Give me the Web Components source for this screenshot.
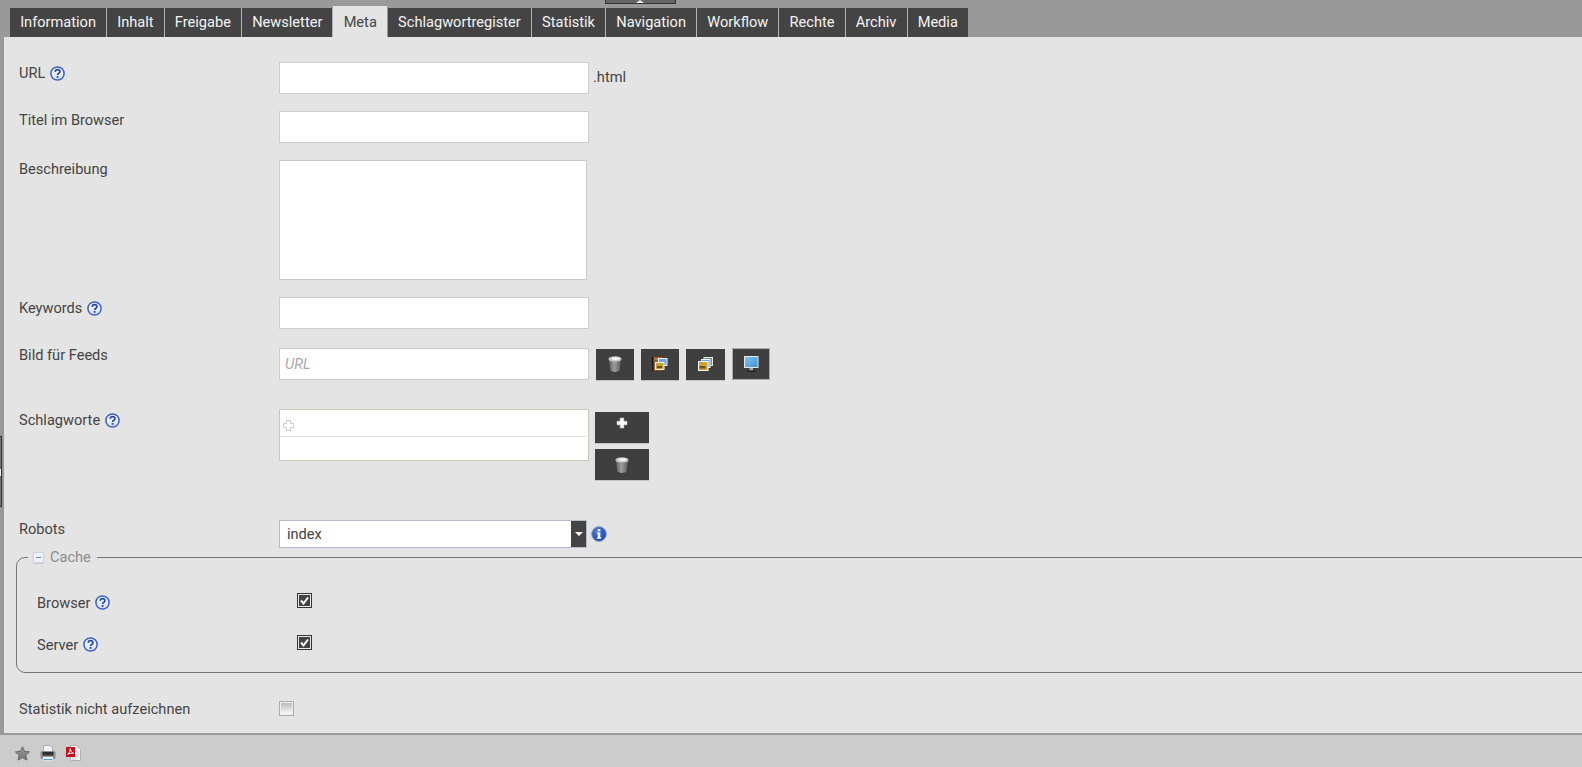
<!DOCTYPE html>
<html lang="de">
<head>
<meta charset="utf-8">
<title>Meta</title>
<style>
html,body{margin:0;padding:0;height:100%;overflow:hidden;background:#e4e4e4;font:14.6px Roboto,"Liberation Sans",sans-serif;color:#444}
</style>
</head>
<body>
<x-shell>
  <x-tabs slot="tabs">
    <x-tab>Information</x-tab><x-tab>Inhalt</x-tab><x-tab>Freigabe</x-tab><x-tab>Newsletter</x-tab><x-tab active>Meta</x-tab><x-tab>Schlagwortregister</x-tab><x-tab>Statistik</x-tab><x-tab>Navigation</x-tab><x-tab>Workflow</x-tab><x-tab>Rechte</x-tab><x-tab>Archiv</x-tab><x-tab>Media</x-tab>
  </x-tabs>

  <x-row style="--lt:2px;--after:17px">
    <span slot="label">URL</span><x-icon slot="label" name="help"></x-icon>
    <x-input></x-input><span style="margin-left:4px;position:relative;top:-1px">.html</span>
  </x-row>
  <x-row style="--lt:0px;--after:17px">
    <span slot="label">Titel im Browser</span>
    <x-input></x-input>
  </x-row>
  <x-row style="--lt:0px;--after:17px;--align:flex-start">
    <span slot="label">Beschreibung</span>
    <x-textarea></x-textarea>
  </x-row>
  <x-row style="--lt:2px;--after:19px">
    <span slot="label">Keywords</span><x-icon slot="label" name="help"></x-icon>
    <x-input></x-input>
  </x-row>
  <x-row style="--lt:-2px;--after:29px">
    <span slot="label">Bild für Feeds</span>
    <x-input placeholder="URL"></x-input>
    <x-toolbar>
      <x-button w="38" h="31"><x-icon name="trash"></x-icon></x-button>
      <x-button w="38" h="31"><x-icon name="album"></x-icon></x-button>
      <x-button w="39" h="31"><x-icon name="images"></x-icon></x-button>
      <x-button w="38" h="32" outlined><x-icon name="monitor"></x-icon></x-button>
    </x-toolbar>
  </x-row>
  <x-row style="--lt:2px;--after:40px;--align:flex-start">
    <span slot="label">Schlagworte</span><x-icon slot="label" name="help"></x-icon>
    <x-tagbox></x-tagbox>
    <x-stack>
      <x-button w="54" h="31" top><x-icon name="plus"></x-icon></x-button>
      <x-button w="54" h="31"><x-icon name="trash"></x-icon></x-button>
    </x-stack>
  </x-row>
  <x-row style="--lt:0px;--after:0px">
    <span slot="label">Robots</span>
    <x-select>index</x-select><x-icon name="info" style="margin-left:4px"></x-icon>
  </x-row>

  <x-group legend="Cache">
    <x-row style="--lt:2px;--after:25px;--lh:17px">
      <span slot="label">Browser</span><x-icon slot="label" name="help"></x-icon>
      <x-check checked></x-check>
    </x-row>
    <x-row style="--lt:2px;--after:0;--lh:17px">
      <span slot="label">Server</span><x-icon slot="label" name="help"></x-icon>
      <x-check checked></x-check>
    </x-row>
  </x-group>

  <x-row style="--lt:0px;--after:0;--lh:17px">
    <span slot="label">Statistik nicht aufzeichnen</span>
    <x-check></x-check>
  </x-row>

  <x-icon slot="footer" name="star"></x-icon>
  <x-icon slot="footer" name="printer"></x-icon>
  <x-icon slot="footer" name="pdf"></x-icon>
</x-shell>

<script>
const ICONS = {
help:{w:15,h:15,svg:`<defs><linearGradient id="g" x1="0" y1="0" x2="0" y2="1"><stop offset="0" stop-color="#fff"/><stop offset="1" stop-color="#d5def6"/></linearGradient></defs>
<circle cx="7.5" cy="7.5" r="6.6" fill="url(#g)" stroke="#3a60cc" stroke-width="1.5"/>
<path d="M5.2 5.9C5.3 4.4 6.3 3.7 7.5 3.7 8.9 3.7 9.9 4.5 9.9 5.7 9.9 7.3 7.6 7.2 7.6 9" fill="none" stroke="#2347b0" stroke-width="1.7"/>
<rect x="6.7" y="10" width="1.8" height="1.8" fill="#2347b0"/>`},
info:{w:16,h:16,svg:`<defs><radialGradient id="i" cx=".4" cy=".3" r=".8"><stop offset="0" stop-color="#4f7fe6"/><stop offset="1" stop-color="#1738a0"/></radialGradient></defs>
<circle cx="8" cy="8" r="7.4" fill="url(#i)" stroke="#9aa6bd" stroke-width="1"/>
<rect x="6.8" y="3" width="2.5" height="2.3" fill="#fff"/><path d="M5.8 6.4H9.3V11.4H10.3V12.8H5.8V11.4H6.8V7.8H5.8Z" fill="#fff"/>`},
trash:{w:14,h:16,svg:`<defs><linearGradient id="t" x1="0" y1="0" x2="1" y2="0"><stop offset="0" stop-color="#626262"/><stop offset=".45" stop-color="#9c9c9c"/><stop offset="1" stop-color="#5c5c5c"/></linearGradient></defs>
<path d="M.8 3.5 2.6 14.6C3.6 16.3 10.4 16.3 11.4 14.6L13.2 3.5Z" fill="url(#t)"/>
<ellipse cx="7" cy="3" rx="6.6" ry="2.8" fill="#c4c4c4"/><ellipse cx="7.6" cy="2.6" rx="4" ry="1.7" fill="#f2f2f2"/>`},
album:{w:16,h:16,svg:`<rect x="0.5" y="0.5" width="10" height="14.5" fill="#96593a" stroke="#6b3418"/><rect x="0" y="1" width="1.5" height="14" fill="#151515"/><rect x="2.5" y="2" width="6.5" height="2" fill="#b57d58"/>
<rect x="6.5" y="2.5" width="8.5" height="7" fill="#6ca6dc" stroke="#e8f0f8"/><rect x="3.5" y="6.5" width="8.5" height="7" fill="#c6a030" stroke="#f8f8f0"/><rect x="5" y="10" width="5" height="2" fill="#6b5314"/>`},
images:{w:15,h:14,svg:`<rect x="6" y="0.5" width="8.5" height="8" fill="#6e8f9f" stroke="#e4efc8"/><rect x="3.5" y="2.5" width="8.5" height="8" fill="#6aa3d8" stroke="#eef"/>
<rect x="0.5" y="4.5" width="9.5" height="9" fill="#d0a52e" stroke="#fff"/><rect x="1.5" y="9" width="6" height="2.5" fill="#6b5314"/>`},
monitor:{w:15,h:17,svg:`<defs><linearGradient id="m" x1="0" y1="0" x2="1" y2="1"><stop offset="0" stop-color="#8cc6ee"/><stop offset="1" stop-color="#3f8ed4"/></linearGradient></defs>
<rect x="0.5" y="0.5" width="13.5" height="11" fill="url(#m)" stroke="#dfe7ec"/><rect x="5.5" y="12" width="3.5" height="2.5" fill="#a8a8a8"/><rect x="3" y="14.5" width="9" height="1.5" fill="#262626"/>`},
plus:{w:12,h:12,svg:`<path d="M4.2 1H7.8V4.2H11V7.8H7.8V11H4.2V7.8H1V4.2H4.2Z" fill="#fff" stroke="#cfd8e8" stroke-width=".5"/>`},
star:{w:15,h:15,svg:`<defs><linearGradient id="s" x1="0" y1="0" x2="0" y2="1"><stop offset="0" stop-color="#9a9a9a"/><stop offset="1" stop-color="#777"/></linearGradient></defs>
<path d="M7.5 .8 9.6 5.3 14.5 5.9 10.8 9.2 11.9 14.1 7.5 11.6 3.1 14.1 4.2 9.2 .5 5.9 5.4 5.3Z" fill="url(#s)" stroke="#666" stroke-width="1"/>`},
printer:{w:16,h:16,svg:`<path d="M3.5 .5H10L12.5 3V7H3.5Z" fill="#f4f7f9" stroke="#a4adb3"/><rect x=".5" y="6" width="15" height="8" rx="1.5" fill="#8d9094"/><rect x="2.5" y="7" width="11" height="3.5" fill="#303030"/>
<rect x="3" y="12" width="10" height="3.5" fill="#eef3f6"/><rect x="3.5" y="14" width="9" height="1" fill="#46a6c8"/>`},
pdf:{w:15,h:16,svg:`<path d="M4.5 .5H10.5L14.5 4.5V15.5H4.5Z" fill="#fafafa" stroke="#a8b0b8"/><path d="M6 8H13M9 6H13M6 10H13M6 12H13M6 14H11" stroke="#c6ccd2"/>
<rect x="0" y="2" width="9" height="10" fill="#c80f1c"/><path d="M1.6 9.3C3.2 8.4 4.6 5.6 4.2 3.6 4.7 5.8 5.8 7.7 7.6 8.2 5.6 8 3.2 8.4 1.6 9.3Z" fill="none" stroke="#fff"/>`}
};

function def(name, css, html, extra){
  const tpl=document.createElement('template');
  tpl.innerHTML=`<style>${css}</style>${html}`;
  customElements.define(name,class extends HTMLElement{
    constructor(){super();this.attachShadow({mode:'open'}).appendChild(tpl.content.cloneNode(true));}
    connectedCallback(){extra&&extra(this,this.shadowRoot);}
  });
}

def('x-shell',`
:host{display:flex;flex-direction:column;height:100vh;width:100%;overflow:hidden;position:relative;background:#999}
.top{flex:none;height:37px;background:#999}
main{flex:1;min-height:0;margin-left:4px;background:#e4e4e4;padding:25px 0 0 15px;overflow:hidden;box-sizing:border-box}
footer{flex:none;height:34px;box-sizing:border-box;border-top:2px solid #999;background:#ccc;margin-left:4px;display:flex;align-items:center;padding:4px 0 0 11px;gap:10px;position:relative}
.foot-strip{position:absolute;left:0;bottom:0;width:4px;height:32px;background:#ccc}
.htop{position:absolute;left:605px;top:0;width:71px;height:4px;box-sizing:border-box;background:#666;border:1px solid #333;border-top:0}
.htop::after{content:"";position:absolute;left:30px;top:0;border:4px solid transparent;border-top:0;border-bottom:3px solid #eee}
.hleft{position:absolute;left:0;top:436px;width:2px;height:71px;box-sizing:border-box;background:#777;border:1px solid #333;border-left:0}
.hleft::after{content:"";position:absolute;left:0;top:32px;width:1px;height:7px;background:#eee}
`,`<div class="top"><slot name="tabs"></slot></div><main><slot></slot></main>
<footer><slot name="footer"></slot></footer><div class="foot-strip"></div><div class="htop"></div><div class="hleft"></div>`);

def('x-tabs',`:host{display:flex;align-items:flex-end;height:37px;padding-left:10px;box-sizing:border-box}`,`<slot></slot>`);

def('x-tab',`
:host{display:block;height:29px;line-height:29px;padding:0 10.15px;background:#444;color:#f4f4f4;border-right:1px solid #b5b5b5;white-space:nowrap}
:host(:last-child){border-right:0}
:host([active]){height:31px;line-height:33px;background:#e4e4e4;color:#444;border-right:1px solid #999}
`,`<slot></slot>`);

def('x-row',`
:host{display:grid;grid-template-columns:260px 1fr;margin-bottom:var(--after,17px)}
.l{display:flex;align-items:center;gap:4.5px;height:var(--lh,18px);position:relative;top:var(--lt,0)}
.c{display:flex;align-items:var(--align,center);min-width:0}
`,`<div class="l"><slot name="label"></slot></div><div class="c"><slot></slot></div>`);

def('x-input',`
:host{display:block;width:310px;height:32px}
input{display:block;width:100%;height:100%;box-sizing:border-box;border:1px solid #ccc;background:#fff;outline:0;margin:0;padding:0 5px;font:inherit;color:#444}
input::placeholder{font-style:italic;color:#aaa;opacity:1}
`,`<input type="text">`,(h,s)=>{const p=h.getAttribute('placeholder');if(p)s.querySelector('input').placeholder=p;});

def('x-textarea',`
:host{display:block;width:308px;height:120px}
textarea{display:block;width:100%;height:100%;box-sizing:border-box;border:1px solid #ccc;background:#fff;outline:0;margin:0;padding:4px;resize:none}
`,`<textarea></textarea>`);

def('x-toolbar',`:host{display:flex;align-items:center;gap:7px;margin-left:7px}`,`<slot></slot>`);
def('x-stack',`:host{display:flex;flex-direction:column;gap:6px;margin:3px 0 0 6px}`,`<slot></slot>`);

def('x-button',`
:host{display:flex;align-items:center;justify-content:center;box-sizing:border-box;background:#3f3f3f;box-shadow:0 1px 0 #c4c4c4}
:host([outlined]){border:1px solid #aaa;box-shadow:none}
:host([top]){align-items:flex-start;padding-top:5px}
`,`<slot></slot>`,(h)=>{h.style.width=h.getAttribute('w')+'px';h.style.height=h.getAttribute('h')+'px';});

def('x-icon',`:host{display:block;flex:none;line-height:0}svg{display:block;overflow:visible}`,``,(h,s)=>{
  const i=ICONS[h.getAttribute('name')];
  if(s.querySelector('svg'))return;
  s.appendChild(document.createRange().createContextualFragment(`<svg xmlns="http://www.w3.org/2000/svg" width="${i.w}" height="${i.h}" viewBox="0 0 ${i.w} ${i.h}">${i.svg}</svg>`));
});

def('x-tagbox',`
:host{display:block;width:310px;height:52px;box-sizing:border-box;border:1px solid #c6cbb8;background:#fff;padding:0 2px 0 0}
.r{height:27px;border-bottom:1px solid #dfe2d6;display:flex;align-items:flex-end;padding:0 0 5px 3px;box-sizing:border-box}
svg{display:block}
`,`<div class="r"><svg width="11" height="11" viewBox="0 0 11 11"><path d="M3.5.5H7.5V3.5H10.5V7.5H7.5V10.5H3.5V7.5H.5V3.5H3.5Z" fill="#fff" stroke="#ccc"/></svg></div>`);

def('x-select',`
:host{display:flex;width:308px;height:28px;box-sizing:border-box;border:1px solid #b5bcc9;background:#fff;align-items:center;justify-content:space-between;padding-left:7px;color:#444}
b{display:flex;align-items:center;justify-content:center;width:15px;height:100%;background:#444}
b::after{content:"";border:4px solid transparent;border-bottom:0;border-top:4px solid #fff}
`,`<slot></slot><b></b>`);

def('x-group',`
:host{display:block;margin:0 -40px 27px -3px}
fieldset{margin:0;border:1px solid #777;border-radius:9px;padding:26px 0 0 20px;min-inline-size:0;height:125px;box-sizing:border-box}
legend{display:flex;align-items:center;gap:6px;margin-left:-9px;padding:0 6px 0 5px;color:#8c8c8c;height:18px}
i{display:block;width:11px;height:11px;box-sizing:border-box;border:1px solid #cfd7e6;background:#eef1f8;position:relative;box-shadow:0 1px 1px #ccc}
i::after{content:"";position:absolute;left:2px;right:2px;top:4px;height:1px;background:#6f87b8}
`,`<fieldset><legend><i></i><span id="t"></span></legend><slot></slot></fieldset>`,(h,s)=>{s.getElementById('t').textContent=h.getAttribute('legend');});

def('x-check',`
:host{display:block;width:15px;height:15px;box-sizing:border-box;border:1px solid #aaa;background:linear-gradient(#b5b5b5,#fff);box-shadow:inset 0 0 0 1px #eee}
:host([checked]){border:1px solid #333;background:#444;box-shadow:inset 0 0 0 1px #e8e8e8}
svg{display:none;width:13px;height:13px}
:host([checked]) svg{display:block}
`,`<svg viewBox="0 0 13 13"><path d="M3 6.5 5.5 9.5 10 3.5" fill="none" stroke="#fff" stroke-width="2"/></svg>`);
</script>
</body>
</html>
